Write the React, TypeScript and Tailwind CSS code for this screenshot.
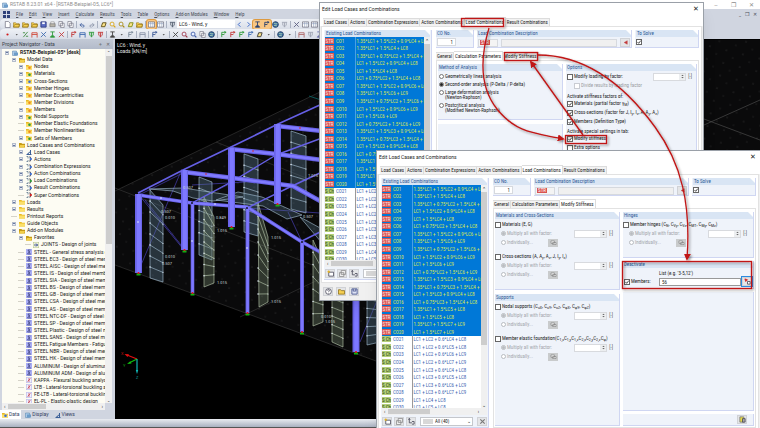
import type { ReactNode } from "react"

const MENUS = ["File", "Edit", "View", "Insert", "Calculate", "Results", "Tools", "Table", "Options", "Add-on Modules", "Window", "Help"]

type TreeRow = { label: string; depth: number; kind: string; toggle?: string; bold?: boolean }

const folder = (label: string, toggle = "+", depth = 2): TreeRow => ({ label, depth, kind: "folder", toggle })
const combo = (label: string, kind: string, toggle = "+"): TreeRow => ({ label, depth: 2, kind, toggle })
const addon = (label: string, kind = "steel"): TreeRow => ({ label, depth: 2, kind })

const TREE: TreeRow[] = [
  { label: "RSTAB-Beispiel-05* [desk]", depth: 0, kind: "model", toggle: "-", bold: true },
  { label: "Model Data", depth: 1, kind: "open", toggle: "-" },
  { ...folder("Nodes"), kind: "folder-orange" },
  { ...folder("Materials"), kind: "folder-green" },
  { ...folder("Cross-Sections"), kind: "folder-blue" },
  { ...folder("Member Hinges"), kind: "folder-orange" },
  { ...folder("Member Eccentricities"), kind: "folder-orange" },
  { ...folder("Member Divisions", ""), kind: "folder-orange" },
  { ...folder("Members"), kind: "folder-orange" },
  { ...folder("Nodal Supports"), kind: "folder-green" },
  { ...folder("Member Elastic Foundations", ""), kind: "folder-green" },
  { ...folder("Member Nonlinearities", ""), kind: "folder-orange" },
  { ...folder("Sets of Members"), kind: "folder-green" },
  { label: "Load Cases and Combinations", depth: 1, kind: "open", toggle: "-" },
  combo("Load Cases", "case"),
  combo("Actions", "combo-blue"),
  combo("Combination Expressions", "combo-blue"),
  combo("Action Combinations", "combo-blue"),
  combo("Load Combinations", "combo-green"),
  combo("Result Combinations", "combo-blue"),
  combo("Super Combinations", "combo-red", ""),
  folder("Loads", "+", 1),
  folder("Results", "+", 1),
  folder("Printout Reports", "", 1),
  folder("Guide Objects", "+", 1),
  { label: "Add-on Modules", depth: 1, kind: "open", toggle: "-" },
  { label: "Favorites", depth: 2, kind: "open", toggle: "-" },
  { label: "JOINTS - Design of joints", depth: 3, kind: "joints" },
  addon("STEEL - General stress analysis of steel members"),
  addon("STEEL EC3 - Design of steel members"),
  addon("STEEL AISC - Design of steel members"),
  addon("STEEL IS - Design of steel members"),
  addon("STEEL SIA - Design of steel members"),
  addon("STEEL BS - Design of steel members"),
  addon("STEEL GB - Design of steel members"),
  addon("STEEL CSA - Design of steel members"),
  addon("STEEL AS - Design of steel members"),
  addon("STEEL NTC-DF - Design of steel members"),
  addon("STEEL SP - Design of steel members"),
  addon("STEEL Plastic - Design of steel members"),
  addon("STEEL SANS - Design of steel members"),
  addon("STEEL Fatigue Members - Fatigue design"),
  addon("STEEL NBR - Design of steel members"),
  addon("STEEL HK - Design of steel members"),
  addon("ALUMINUM - Design of aluminum members"),
  addon("ALUMINUM ADM - Design of aluminum members"),
  addon("KAPPA - Flexural buckling analysis", "stability"),
  addon("LTB - Lateral-torsional buckling analysis", "stability"),
  addon("FE-LTB - Lateral-torsional buckling analysis", "stability"),
  addon("EL-PL - Elastic-plastic design", "stability"),
]

const COMBINATIONS = [
  "1.35*LC1 + 1.5*LC2 + 0.9*LC4 + LC8",
  "1.35*LC1 + 1.5*LC4 + LC8",
  "1.35*LC1 + 0.75*LC2 + 1.5*LC4 + LC8",
  "LC1 + 1.5*LC2 + 0.9*LC4 + LC8",
  "LC1 + 1.5*LC4 + LC8",
  "LC1 + 0.75*LC2 + 1.5*LC4 + LC8",
  "1.35*LC1 + 1.5*LC2 + 0.9*LC6 + LC9",
  "1.35*LC1 + 1.5*LC6 + LC9",
  "1.35*LC1 + 0.75*LC2 + 1.5*LC6 + LC9",
  "LC1 + 1.5*LC2 + 0.9*LC6 + LC9",
  "LC1 + 1.5*LC6 + LC9",
  "LC1 + 0.75*LC2 + 1.5*LC6 + LC9",
  "1.35*LC1 + 1.5*LC3 + 0.9*LC4 + LC8",
  "1.35*LC1 + 0.75*LC3 + 1.5*LC4 + LC8",
  "LC1 + 1.5*LC3 + 0.9*LC4 + LC8",
  "LC1 + 0.75*LC3 + 1.5*LC4 + LC8",
  "1.35*LC1 + 1.5*LC5 + LC8",
  "LC1 + 1.5*LC5 + LC8",
  "1.35*LC1 + 1.5*LC7 + LC9",
  "LC1 + 1.5*LC7 + LC9",
  "LC1 + LC2 + 0.6*LC4 + LC8",
  "LC1 + LC2 + 0.6*LC5 + LC8",
  "LC1 + LC2 + 0.6*LC6 + LC9",
  "LC1 + LC2 + 0.6*LC7 + LC9",
  "LC1 + LC3 + 0.6*LC4 + LC8",
  "LC1 + LC3 + 0.6*LC5 + LC8",
  "LC1 + LC3 + 0.6*LC6 + LC9",
  "LC1 + LC3 + 0.6*LC7 + LC9",
  "LC1 + LC4 + LC8",
  "LC1 + LC5 + LC8",
]

const DOT: Record<string, string> = { orange: "#f08a1c", green: "#2f9a3a", blue: "#3f6fd0", red: "#d02020" }

function TreeIcon({ kind }: { kind: string }) {
  const [base, tone] = kind.split("-")
  return (
    <svg viewBox="0 0 12 12" className="size-[6px] shrink-0" aria-hidden>
      {(base === "folder" || base === "open") && (
        <>
          <path d="M0 2h5l1 1.500h6V11H0z" fill={base === "open" ? "#c79a14" : "#e9b923"} />
          <path d={base === "open" ? "M2 6h10l-2 5H0z" : "M0 5h12v6H0z"} fill={base === "open" ? "#f2cf4a" : "#fbe06a"} />
          {tone && <circle cx="7" cy="7.500" r="2.600" fill={DOT[tone]} />}
        </>
      )}
      {base === "combo" && (
        <>
          <path d="M1 1h3v4M1 11h3V8" stroke="#55708a" strokeWidth="1.500" fill="none" />
          <path d="M6 2h3v8H6" stroke="#334" strokeWidth="1.400" fill="none" />
          <circle cx="9.500" cy="6" r="2.400" fill={DOT[tone]} />
        </>
      )}
      {base === "case" && <path d="M1 11h10M9 2v9M4 8v3M9 5 4 9" stroke="#3a5f98" strokeWidth="2" fill="none" />}
      {base === "model" && (
        <>
          <path d="M1 2h8v9H1z" fill="#a9c9e8" stroke="#5580aa" />
          <path d="M4 5h8v6H4z" fill="#6c9cc9" />
        </>
      )}
      {base === "joints" && (
        <>
          <path d="M0 0h12v12H0z" fill="#eef3d8" stroke="#8a9a55" />
          <path d="M2 6h8M6 3l3 3-3 3" stroke="#3a4f9a" strokeWidth="1.800" fill="none" />
        </>
      )}
      {base === "steel" && (
        <>
          <path d="M0 0h12v12H0z" fill="#a9adf5" />
          <path d="M9 2H4l2 4-3 4h7M7 4v5" stroke="#2b2f66" strokeWidth="1.200" fill="none" />
        </>
      )}
      {base === "stability" && (
        <>
          <path d="M.5.500h11v11H.5z" fill="#f1eefc" stroke="#8f90dd" />
          <path d="M3 9 9 3M6 2v8" stroke="#c23a4a" strokeWidth="1.400" fill="none" />
        </>
      )}
    </svg>
  )
}

// toolbar glyphs, drawn on a 16 unit grid
function Tool({ kind, color = "#3f5f9f" }: { kind: string; color?: string }) {
  return (
    <button type="button" aria-label={kind} className="grid h-[9px] w-[9px] shrink-0 place-items-center">
      <svg viewBox="0 0 16 16" className="size-[7px]" fill="none" stroke={color} strokeWidth="2" aria-hidden>
        {kind === "new" && <path d="M3 1h7l4 4v10H3z" fill="#fff" stroke="#667" strokeWidth="1.500" />}
        {kind === "open" && <path d="M1 14V4h5l2 2h6v8zM4 8h12l-3 6H1z" fill="#f5cf52" stroke="#8a6c14" strokeWidth="1.200" />}
        {kind === "save" && <><path d="M2 2h12v12H2z" fill="#5a6cc4" stroke="#2f3b80" /><path d="M5 3h6v4H5z" fill="#fff" stroke="none" /></>}
        {kind === "print" && <><path d="M2 6h12v7H2z" fill="#b9b4a8" stroke="#666" strokeWidth="1.300" /><path d="M4 2h8v4H4z" fill="#fff" stroke="#777" strokeWidth="1.200" /></>}
        {kind === "copy" && <path d="M2 1h8v10H2zM6 5h8v10H6z" fill="#fff" stroke="#667" strokeWidth="1.400" />}
        {kind === "undo" && <path d="M3 9h7a3 3 0 0 1 0 5H8M6 5 2 9l4 4" />}
        {kind === "redo" && <path d="M13 9H6a3 3 0 0 0 0 5h2M10 5l4 4-4 4" />}
        {kind === "pen" && <path d="M3 13 6 4h8l-3 9z" fill="#fbe38a" stroke={color} />}
        {kind === "lens" && <><circle cx="7" cy="7" r="4.500" fill="#e8f0ff" /><path d="m10.500 10.500 4 4" strokeWidth="3" /></>}
        {kind === "table" && <><path d="M1 2h14v12H1z" fill="#fff" stroke="#556" strokeWidth="1.400" /><path d="M1 6h14M6 2v12M11 2v12" stroke="#8899b8" strokeWidth="1.300" /></>}
        {kind === "frame" && <path d="M2 15V4h12v11M2 8h12" />}
        {kind === "cross" && <path d="M2 14 14 2M3 3l10 10" />}
        {kind === "member" && <path d="M3 14 13 2M2 4h5M9 12h5" />}
        {kind === "support" && <path d="M8 2v7M8 9l-5 5h10zM3 2h10" fill={color} />}
        {kind === "load" && <path d="M2 3h12M4 3v7M8 3v10M12 3v7M6 10l2 4 2-4" />}
        {kind === "dot" && <circle cx="8" cy="8" r="2.500" fill={color} stroke="none" />}
        {kind === "axis" && <path d="M4 14V3h9M4 8h6M10 5l4-2-4-2" />}
        {kind === "left" && <path d="m10 3-5 5 5 5" />}
        {kind === "right" && <path d="m6 3 5 5-5 5" />}
        {kind === "globe" && <><circle cx="8" cy="8" r="6.500" fill="#3a6ea5" stroke="#203c60" /><path d="M4 5c3 0 4 3 8 1M4 11c3-2 5 0 7 0" stroke="#bfe0b0" /></>}
        {kind === "more" && <path d="M6 7h5l-2.500 3z" fill="#555" stroke="none" />}
      </svg>
    </button>
  )
}

const Divider = () => <span className="mx-px h-[7px] w-px shrink-0 bg-[#aab2c2]" />

function Toolbars() {
  return (
    <div className="flex flex-col bg-[#d0d5e0]">
      <div className="flex h-[10px] w-[380px] items-center rounded-sm bg-gradient-to-b from-[#eef1f6] to-[#d9dee8] pl-[3px]">
        <Tool kind="new" />
        <Tool kind="open" />
        <Tool kind="open" color="#996" />
        <Tool kind="open" />
        <Tool kind="save" />
        <Tool kind="print" />
        <Tool kind="copy" />
        <Tool kind="copy" />
        <Divider />
        <Tool kind="undo" />
        <Tool kind="redo" color="#8a94a8" />
        <Divider />
        <Tool kind="pen" color="#5a4a12" />
        <Tool kind="lens" color="#d9a514" />
        <Tool kind="lens" color="#a98a14" />
        <Tool kind="pen" color="#7a8a14" />
        <Tool kind="open" />
        <Divider />
        <span className="grid rounded-xs bg-[#f9c784] ring-1 ring-[#dd9a40]"><Tool kind="table" /></span>
        <Tool kind="table" />
        <Divider />
        <Tool kind="load" color="#555f70" />
        <select
          aria-label="Load case"
          className="h-[8px] w-[58px] appearance-none bg-white px-[2px] leading-none text-[#222]"
        >
          <option>LC6 - Wind, y</option>
        </select>
        <Tool kind="left" color="#2458c4" />
        <Tool kind="right" color="#2458c4" />
        <span className="flex rounded-xs bg-[#f9c784] ring-1 ring-[#dd9a40]">
          <Tool kind="support" color="#29406e" />
          <Tool kind="axis" color="#29406e" />
        </span>
        <Tool kind="globe" />
        <Tool kind="load" color="#a0a6b4" />
        <Divider />
        <Tool kind="cross" color="#5c5f80" />
        <Tool kind="table" />
        <Tool kind="table" />
      </div>
      <div className="flex h-[10px] w-[380px] items-center rounded-sm bg-gradient-to-b from-[#eef1f6] to-[#d9dee8] pl-[3px]">
        <Tool kind="dot" color="#d11a1a" />
        <Tool kind="more" />
        <Tool kind="member" color="#3d8a3d" />
        <Tool kind="frame" color="#d04a3a" />
        <Tool kind="cross" color="#3d6ab0" />
        <Tool kind="support" color="#2f9a3a" />
        <Tool kind="cross" color="#c23a3a" />
        <Divider />
        <Tool kind="axis" color="#c23a3a" />
        <Tool kind="frame" color="#3d6ab0" />
        <Tool kind="load" color="#2f9a3a" />
        <Tool kind="load" color="#c23a3a" />
        <Divider />
        <Tool kind="support" color="#444" />
        <Tool kind="more" />
        <Tool kind="axis" color="#7a8a9a" />
        <Divider />
        <Tool kind="frame" color="#8a93a8" />
        <Divider />
        <Tool kind="axis" color="#3d5a98" />
        <Tool kind="more" />
        <Divider />
        <Tool kind="cross" color="#444" />
        <Tool kind="lens" color="#a03a4a" />
        <Tool kind="lens" color="#3d5aa8" />
        <Tool kind="copy" />
        <Tool kind="globe" />
        <Divider />
        <Tool kind="axis" color="#2f9a3a" />
        <Tool kind="axis" color="#c23a3a" />
        <Tool kind="axis" color="#2f9a3a" />
        <Tool kind="axis" color="#3d6ab0" />
        <Tool kind="pen" color="#333" />
        <Tool kind="more" />
        <Divider />
        <Tool kind="globe" />
        <Tool kind="more" />
        <Divider />
        <Tool kind="frame" color="#b06a6a" />
        <Tool kind="load" color="#a0a6b4" />
        <Tool kind="support" color="#6a6fb0" />
      </div>
    </div>
  )
}

const INDENT = ["pl-[2px]", "pl-[9px]", "pl-[16px]", "pl-[23px]"]

function Navigator() {
  return (
    <aside className="flex w-[113px] shrink-0 flex-col bg-[#d0d5e0]">
      <div className="flex h-[10px] shrink-0 items-center justify-between bg-gradient-to-b from-[#c3cad6] to-[#b3bbca] px-[2px] text-[#3a3f4a]">
        <h2>Project Navigator - Data</h2>
        <span className="flex gap-1 pr-px text-[#666]">
          <button type="button" aria-label="Pin">⌖</button>
          <button type="button" aria-label="Close navigator">✕</button>
        </span>
      </div>
      <div className="mr-px ml-[2px] flex min-h-0 flex-1">
        <div className="min-w-0 flex-1 overflow-hidden bg-[#fdfcf3]">
          <ul className="flex h-[356px] flex-col">
            {TREE.map((row) => (
              <li key={row.label} className={`flex min-h-0 flex-1 items-center gap-[2px] whitespace-nowrap ${INDENT[row.depth]}`}>
                <span className="grid w-[6px] shrink-0 place-items-center">
                  {row.toggle ? (
                    <span className="grid size-[4px] place-items-center border border-[#b4bccb] bg-[#e8ecf4]">
                      <span className="h-px w-[2px] bg-[#6678a0]" />
                    </span>
                  ) : (
                    <span className="h-px w-full bg-[#d5d3c8]" />
                  )}
                </span>
                <TreeIcon kind={row.kind} />
                <span className={row.bold ? "font-bold" : ""}>{row.label}</span>
              </li>
            ))}
          </ul>
        </div>
        <div className="flex w-[7px] flex-col items-center bg-[#f0f0f0]">
          <span className="grid h-[7px] place-items-center text-[4px]">⌃</span>
          <span className="h-[188px] w-[6px] bg-[#cdcdcd]" />
          <span className="mt-auto text-[4px]">⌄</span>
        </div>
      </div>
      <div className="mr-2 ml-[2px] flex h-[7px] shrink-0 items-center bg-[#f0f0f0] px-[2px]">
        <span>‹</span>
        <span className="mx-[2px] h-[5px] w-[38px] bg-[#cdcdcd]" />
        <span className="ml-auto">›</span>
      </div>
      <div className="flex h-[9px] shrink-0 items-center gap-[2px] text-[#33405e]">
        <button type="button" className="flex h-full items-center gap-px bg-white px-[2px]"><TreeIcon kind="folder-blue" />Data</button>
        <button type="button" className="flex items-center gap-px px-[2px]"><TreeIcon kind="model" />Display</button>
        <button type="button" className="flex items-center gap-px px-[2px]"><TreeIcon kind="case" />Views</button>
      </div>
    </aside>
  )
}

type Pt = [number, number]

const LINKS: { pts: Pt[]; w: number }[] = [
  { pts: [[138, 193], [185, 169], [231, 147], [278, 124], [322, 104]], w: 1.6 },
  { pts: [[190, 204], [233, 181], [276, 155], [322, 138]], w: 1.4 },
  { pts: [[247, 208], [290, 187], [322, 172]], w: 1.4 },
  { pts: [[302, 241], [322, 231]], w: 1.4 },
  { pts: [[138, 195], [192, 203], [247, 207], [302, 242], [322, 253]], w: 3.6 },
  { pts: [[184, 172], [233, 178], [293, 186], [322, 202]], w: 4.6 },
  { pts: [[230, 149], [276, 154], [322, 160]], w: 4.6 },
  { pts: [[277, 126], [322, 131]], w: 4.6 },
]

// x, top, bottom, width of each column
const COLUMNS = [
  [138.5, 194, 273, 7], [184.5, 170, 250, 7], [231.5, 148, 227, 7], [277.5, 124, 204, 7],
  [192.5, 203, 293, 3.6], [247.5, 208, 313, 3.8], [302, 242, 332, 3.8], [356, 250, 352, 7],
]

const LOAD_PANELS: { p: Pt[]; tone: string; steps: number }[] = [
  { p: [[150, 190], [163, 205], [163, 282], [150, 278]], tone: "b", steps: 7 },
  { p: [[199, 177], [212, 182], [212, 260], [199, 255]], tone: "b", steps: 6 },
  { p: [[204, 197], [214, 217], [214, 283], [204, 287]], tone: "g", steps: 7 },
  { p: [[244, 154], [258, 159], [258, 236], [244, 232]], tone: "b", steps: 6 },
  { p: [[258, 203], [268, 237], [268, 302], [259, 307]], tone: "g", steps: 7 },
  { p: [[291, 131], [306, 136], [306, 213], [291, 209]], tone: "b", steps: 6 },
  { p: [[313, 240], [323, 262], [323, 322], [313, 326]], tone: "g", steps: 6 },
  { p: [[332, 290], [343, 294], [343, 347], [332, 342]], tone: "g", steps: 5 },
  { p: [[367, 290], [380, 294], [380, 342], [367, 345]], tone: "b", steps: 5 },
]

const VALUES: [number, number, string][] = [
  [161, 213, "0.507"], [165, 219, "0.010"], [165, 258, "0.010"], [162, 265, "0.507"],
  [183, 189, "0.507"], [216, 219, "0.849"], [217, 232, "1.015"], [217, 284, "1.015"],
  [271, 239, "1.015"], [271, 303, "1.015"], [303, 218, "0.507"], [308, 177, "1.015"],
  [321, 318, "0.010"], [325, 323, "1.015"],
]

const join = (pts: Pt[]) => pts.map((p) => p.join(",")).join(" ")

function Viewport() {
  return (
    <div className="relative min-w-0 flex-1 bg-black">
      <svg viewBox="115 39 645 380" preserveAspectRatio="xMinYMin slice" className="absolute inset-0 size-full" aria-label="Structural model">
        <defs>
          <pattern id="floor" width="17" height="13" patternUnits="userSpaceOnUse" patternTransform="rotate(14)">
            <circle cx="3" cy="3" r=".5" fill="#4a4a4a" />
            <circle cx="11" cy="9" r=".5" fill="#3a3a3a" />
          </pattern>
        </defs>
        <path d="M115 191 320 92 440 40H760V300L376 361 115 265z" fill="#0a0a0b" />
        <path d="M115 191 320 92 440 40H760V300L376 361 115 265z" fill="url(#floor)" />
        <g fill="none" stroke="#3c3c3c" strokeWidth=".6">
          <path d="M115 191 320 92M115 265l261 96M115 188l200 78M216 142l100 40M240 317l80-38" />
          <path d="M704 119l56 21M704 125l56-25" stroke="#555" />
        </g>
        <path d="M309 96l12 4" stroke="#0a6a6a" strokeWidth=".8" />
        <g stroke="#4038a0" strokeWidth=".8" fill="none">
          <path d="M139 195l45 55M141 265l41-96M139 195l46-23M185 250l-40-50M192 203l43-22M247 208l73 5M192 185l54-3M302 242l-14-30M360 342l18-44" />
        </g>
        {LOAD_PANELS.map(({ p, tone, steps }) => {
          const line = tone === "b" ? "#a9c4d8" : "#bfd0b4"
          return (
            <g key={join(p)} stroke={line} strokeWidth=".6">
              <polygon points={join(p)} fill={tone === "b" ? "#5a7a90" : "#6f8068"} fillOpacity=".38" />
              {Array.from({ length: steps }, (_, i) => {
                const t = (i + 1) / (steps + 1)
                const y1 = p[0][1] + (p[3][1] - p[0][1]) * t
                const y2 = p[1][1] + (p[2][1] - p[1][1]) * t
                return (
                  <g key={i}>
                    <line x1={p[0][0]} y1={y1} x2={p[1][0]} y2={y2} />
                    <circle cx={p[0][0]} cy={y1} r=".7" fill="#e8f4ff" stroke="none" />
                    <circle cx={p[1][0]} cy={y2} r=".5" fill="#e8f4ff" stroke="none" />
                  </g>
                )
              })}
            </g>
          )
        })}
        <g stroke="#a9c4d8" strokeWidth=".6" fill="#5a7a90" fillOpacity=".3">
          <path d="M149 189l34-1 60 9-30 4-20-3-20-7zM216 200l22-8 24 5 40 18-15 4-24-13zM300 217l22 26v-14z" />
        </g>
        {LINKS.map(({ pts, w }) => (
          <g key={join(pts)} fill="none" strokeLinejoin="round">
            <polyline points={join(pts)} stroke="#6660e6" strokeWidth={w} />
            {w > 3 && <polyline points={join(pts)} stroke="#817cff" strokeWidth={w / 2} />}
          </g>
        ))}
        {COLUMNS.map(([x, top, bottom, w]) => (
          <g key={`${x}-${top}`}>
            <rect x={x - w / 2} y={top} width={w} height={bottom - top} fill="#6a64e8" />
            <rect x={x - w / 4} y={top} width={w / 1.7} height={bottom - top} fill="#7d78ff" />
            <rect x={x - 2} y={bottom + 0.5} width="4" height="2" fill="#12b012" />
            <circle cx={x} cy={bottom} r="1.100" fill="#e01818" />
          </g>
        ))}
        {[[192, 203], [247, 208], [302, 242]].map(([x, y]) => (
          <circle key={x} cx={x} cy={y} r="1" fill="#15152a" />
        ))}
        {[[206, 174], [253, 151], [300, 128]].map(([x, y]) => (
          <circle key={x} cx={x} cy={y} r=".8" fill="#e02020" />
        ))}
        {[[138, 222], [192, 241], [247, 248], [161, 198], [215, 204]].map(([x, y]) => (
          <circle key={x} cx={x} cy={y} r=".8" fill="#e8f4ff" />
        ))}
        <g fill="#c9d6d6" fontSize="4">
          {VALUES.map(([x, y, text]) => (
            <text key={`${x}-${y}`} x={x} y={y}>{text}</text>
          ))}
        </g>
        <g fill="none" strokeWidth="1.200">
          <path d="M137 359l-10-4" stroke="#e01010" />
          <path d="M137 359l-8 4" stroke="#10c010" />
          <path d="M137 359v12" stroke="#10b8b8" />
        </g>
        <path d="M124.500 354l4.500.300-1.500 2.700z" fill="#e01010" />
        <path d="M127 364l4.500-.5-1.200-2.200z" fill="#10c010" />
        <path d="M137 374l-1.200-4h2.400z" fill="#10b8b8" />
        <g fontSize="4">
          <text x="121" y="355" fill="#c01010">X</text>
          <text x="123" y="367" fill="#10a010">Y</text>
          <text x="136" y="379" fill="#10a0a0">Z</text>
        </g>
      </svg>
      <p className="relative px-[2px] pt-[3px] leading-[6px] text-[#e6e6e6]">
        LC6 : Wind, y
        <br />
        Loads [kN/m]
      </p>
    </div>
  )
}

function Group({ title, className = "", children }: { title?: string; className?: string; children?: ReactNode }) {
  return (
    <section className={`flex flex-col border-r border-b border-[#cfd6f2] bg-[#eff3fa] ${className}`}>
      {title && (
        <div className="bg-white">
          <h3 className="h-[7px] bg-[#d9e5f4] pl-px leading-[7px] text-[#2f5a96] [clip-path:polygon(0_0,calc(100%-5px)_0,100%_5px,100%_100%,0_100%)]">
            {title}
          </h3>
        </div>
      )}
      {children}
    </section>
  )
}

function Check({ children, label, checked, muted }: { children?: ReactNode; label?: string; checked?: boolean; muted?: boolean }) {
  return (
    <label className={`flex h-[9px] items-center gap-px whitespace-nowrap ${muted ? "text-[#9a9da2]" : "text-[#222]"}`}>
      <span className="grid shrink-0 place-items-center">
        <input
          type="checkbox"
          aria-label={label}
          defaultChecked={checked}
          disabled={muted}
          className={`size-[6px] appearance-none border bg-white [grid-area:1/1] ${muted ? "border-[#c9ccd2]" : "border-[#666]"}`}
        />
        {checked && (
          <svg viewBox="0 0 6 6" className="pointer-events-none size-[6px] [grid-area:1/1]" aria-hidden>
            <path d="M1.500 3l1.200 1.300L4.800 1.600" fill="none" stroke="#222" strokeWidth=".8" />
          </svg>
        )}
      </span>
      <span>{children}</span>
    </label>
  )
}

function Radio({ name, checked, muted, children }: { name: string; checked?: boolean; muted?: boolean; children: ReactNode }) {
  return (
    <label className={`flex items-start gap-px leading-[5px] whitespace-nowrap ${muted ? "text-[#a2a5aa]" : "text-[#222]"}`}>
      <span className="grid shrink-0 place-items-center">
        <input
          type="radio"
          name={name}
          defaultChecked={checked}
          disabled={muted}
          className={`size-[5px] appearance-none rounded-full border bg-white [grid-area:1/1] ${muted ? "border-[#b8bbc0]" : "border-[#777]"}`}
        />
        {checked && <span className={`pointer-events-none size-[3px] rounded-full [grid-area:1/1] ${muted ? "bg-[#b8bbc0]" : "bg-[#222]"}`} />}
      </span>
      <span>{children}</span>
    </label>
  )
}

function Spinner({ label }: { label: string }) {
  return (
    <span className="flex items-center gap-[2px]">
      <span className="flex h-[8px] w-[33px] border border-[#d8dade] bg-white">
        <input aria-label={label} disabled className="min-w-0 flex-1" />
        <span className="grid w-[6px] place-items-center bg-[#eceef0]">
          <svg viewBox="0 0 6 6" className="size-[5px]" fill="#666" aria-hidden>
            <path d="M1.500 2.300 3 .8l1.500 1.500zM1.500 3.700 3 5.200l1.500-1.500z" />
          </svg>
        </span>
      </span>
      <span className="text-[#555]">[-]</span>
    </span>
  )
}

const Sym = ({ b, s }: { b: string; s: string }) => (
  <>
    {b}
    <span className="relative top-px text-[4px]">{s}</span>
  </>
)

function FactorBlock({ name, children }: { name: string; children: ReactNode }) {
  return (
    <div>
      <Check>{children}</Check>
      <div className="flex h-[9px] items-center justify-between pr-[6px] pl-[6px]">
        <Radio name={name} checked muted>Multiply all with factor:</Radio>
        <Spinner label={`${name} factor`} />
      </div>
      <div className="flex h-[9px] items-center pl-[6px]">
        <span className="w-[47px]"><Radio name={name} muted>Individually...</Radio></span>
        <button type="button" aria-label="Edit individually" className="grid h-[8px] w-[10px] place-items-center bg-[#c9cbcc]">
          <svg viewBox="0 0 8 6" className="h-[5px] w-[7px]" aria-hidden>
            <path d="M1 1h4v3H1zM3 3h4v2.500H3z" fill="#eee" stroke="#777" strokeWidth=".7" />
          </svg>
        </button>
      </div>
    </div>
  )
}

function CombinationList() {
  return (
    <div className="flex flex-col">
      <div className="flex h-[223px] bg-white">
        <div className="min-w-0 flex-1 overflow-hidden">
          <table className="h-[226px] w-full table-fixed border-collapse leading-[6px] whitespace-nowrap">
            <colgroup>
              <col className="w-[9px]" />
              <col className="w-[21px]" />
              <col />
            </colgroup>
            <tbody>
              {COMBINATIONS.map((expr, i) => {
                const selected = i < 20
                return (
                  <tr key={expr} className={selected ? "bg-[#0078d7] text-[#dcea4c]" : "bg-white text-[#3a5fb0]"}>
                    <td className="p-0 align-middle">
                      <span className={`block h-[6px] text-center ${selected ? "bg-[#d9534f] text-[#fbe3e3]" : "bg-[#b5cf7a] text-[#24400c]"}`}>
                        {selected ? "STR" : "S Ch"}
                      </span>
                    </td>
                    <td className="p-0 pl-[2px] align-middle">CO{i + 1}</td>
                    <td className={`overflow-hidden border-l p-0 pl-px align-middle ${selected ? "border-[#4aa0e6]" : "border-[#999]"}`}>{expr}</td>
                  </tr>
                )
              })}
            </tbody>
          </table>
        </div>
        <div className="flex w-[6px] flex-col items-center bg-[#f0f0f0]">
          <span className="h-[7px] text-[5px] leading-[8px]">⌃</span>
          <span className="h-[153px] w-full bg-[#cdcdcd]" />
          <span className="mt-auto text-[5px]">⌄</span>
        </div>
      </div>
      <div className="flex h-[7px] items-center bg-[#f0f0f0] pr-[8px] pl-[2px]">
        <span>‹</span>
        <span className="mx-[3px] h-[5px] w-[42px] bg-[#cdcdcd]" />
        <span className="ml-auto">›</span>
      </div>
      <div className="flex h-[12px] items-center gap-[2px]">
        <PushButton label="New" glyph="new" />
        <PushButton label="Copy" glyph="copy" />
        <PushButton label="Sort" glyph="sort" />
        <span className="mx-[2px] flex h-[9px] flex-1 items-center border border-[#c4c7cc] bg-white pl-[2px]">
          <span className="h-[5px] w-[10px] shrink-0 bg-[#d8d8d8]" />
          <select aria-label="Filter" className="min-w-0 flex-1 appearance-none pl-[2px] leading-none">
            <option>All (40)</option>
          </select>
          <span className="pr-px leading-[3px]">⌄</span>
        </span>
        <PushButton label="Delete" glyph="delete" />
      </div>
    </div>
  )
}

function PushButton({ label, glyph }: { label: string; glyph: string }) {
  return (
    <button type="button" aria-label={label} className="grid h-[9px] w-[10px] shrink-0 place-items-center border border-[#d0d2d6] bg-[#e4e5e7]">
      <svg viewBox="0 0 16 16" className="size-[7px]" fill="none" stroke="#445" strokeWidth="1.800" aria-hidden>
        {glyph === "new" && <><path d="M4 5h11v9H4z" fill="#fff" /><path d="M1 4h6M4 1v6" stroke="#e0b020" strokeWidth="2.500" /></>}
        {glyph === "copy" && <path d="M5 1h10v9H5zM1 6h10v9H1z" fill="#eee" stroke="#888" />}
        {glyph === "sort" && <path d="M3 1v10h6M9 8h5v6H9M1 4l2-3 2 3" />}
        {glyph === "delete" && <path d="M3 3l10 10M13 3 3 13" stroke="#777" strokeWidth="2.500" />}
        {glyph === "help" && <><circle cx="8" cy="8" r="6.500" fill="#fff" /><path d="M6 6c0-3 4-3 4 0 0 1.500-2 1.500-2 3M8 11v1.500" /></>}
        {glyph === "open" && <path d="M1 14V4h5l2 2h7v8z" fill="#f5cf52" stroke="#8a6c14" />}
        {glyph === "save" && <path d="M2 2h12v12H2zM5 2v5h6V2" fill="#dfe4f4" stroke="#3b4a8a" />}
        {glyph === "pick" && <><path d="M2 2l6 2-4 4z" fill="#d02020" stroke="#d02020" /><path d="M8 8h6v6H8z" fill="#fff" /></>}
        {glyph === "arrow" && <path d="M12 4 5 8l7 4z" fill="#c23a3a" stroke="#c23a3a" strokeWidth="1" />}
        {glyph === "info" && <><path d="M2 2h9v12H2z" fill="#e6d94a" stroke="#777" /><path d="M8 6h6v8H8z" fill="#aaa" /></>}
      </svg>
    </button>
  )
}

const DIALOG_TABS = ["Load Cases", "Actions", "Combination Expressions", "Action Combinations", "Load Combinations", "Result Combinations"]

function TabStrip({ tabs, active }: { tabs: string[]; active: string }) {
  return (
    <div role="tablist" className="flex h-[9px] shrink-0 items-end">
      {tabs.map((tab) => (
        <button
          key={tab}
          type="button"
          role="tab"
          aria-selected={tab === active}
          className={`border-t border-r border-[#dcdcdc] px-px whitespace-nowrap ${tab === active ? "h-[9px] bg-white" : "h-[8px] bg-[#f2f2f2]"}`}
        >
          {tab}
        </button>
      ))}
    </div>
  )
}

function Dialog({ className, activeTab, children }: { className: string; activeTab: string; children: ReactNode }) {
  return (
    <div role="dialog" aria-label="Edit Load Cases and Combinations" className={`absolute flex w-[385px] flex-col border border-[#9aa0a8] bg-[#f0f0f0] px-px font-['Roboto_Condensed','Liberation_Sans_Narrow','Open_Sans',sans-serif] shadow-lg ${className}`}>
      <header className="-mx-px flex h-[13px] items-center justify-between bg-white pr-1 pl-[2px] font-[Roboto,'Liberation_Sans',sans-serif]">
        <h2>Edit Load Cases and Combinations</h2>
        <button type="button" aria-label="Close dialog" className="text-[7px]">✕</button>
      </header>
      <div className="-mx-px bg-white px-[3px] pt-px">
        <TabStrip tabs={DIALOG_TABS} active="Load Combinations" />
      </div>
      <div className="flex gap-[4px] border border-[#e2e2e2] bg-white p-[2px] pt-[3px]">
        <Group title="Existing Load Combinations" className="w-[108px] shrink-0 px-px">
          <CombinationList />
        </Group>
        <div className="flex min-w-0 flex-1 flex-col">
          <div className="flex gap-[3px]">
            <Group title="CO No." className="h-[18px] w-[38px]">
              <input aria-label="CO number" defaultValue="1" className="m-px h-[8px] w-[19px] border border-[#d6d9de] bg-white pr-[2px] text-right" />
            </Group>
            <Group title="Load Combination Description" className="h-[18px] flex-1">
              <div className="flex items-center gap-[3px] p-px">
                <span className="grid h-[8px] w-[20px] items-center border border-[#d6d9de] bg-[#f4f4f4] pl-px">
                  <span className="h-[5px] w-[10px] bg-[#d9534f] text-center leading-[5px] text-white">STR</span>
                </span>
                <input aria-label="Load combination description" className="h-[8px] min-w-0 flex-1 border border-[#d6d9de] bg-[#f0f0f0]" />
                <PushButton label="Insert description" glyph="arrow" />
              </div>
            </Group>
            <Group title="To Solve" className="h-[18px] w-[64px] pl-px">
              <Check label="To solve" checked />
            </Group>
          </div>
          <div className="mt-[3px] flex min-h-0 flex-1 flex-col">
            <TabStrip tabs={["General", "Calculation Parameters", "Modify Stiffness"]} active={activeTab} />
            <div className="flex min-h-0 flex-1 gap-[3px] border border-[#e2e2e2] bg-white p-px pt-[3px]">{children}</div>
          </div>
        </div>
      </div>
      <footer className="flex items-center gap-[3px] px-[2px] py-[4px]">
        <PushButton label="Help" glyph="help" />
        <PushButton label="Open" glyph="open" />
        <PushButton label="Save" glyph="save" />
      </footer>
    </div>
  )
}

function CalculationParameters() {
  return (
    <>
      <div className="flex w-[125px] flex-col gap-[4px]">
        <Group title="Method of Analysis" className="h-[56px]">
          <div className="flex flex-col gap-[3px] pt-[3px] pl-px">
            <Radio name="method">Geometrically linear analysis</Radio>
            <Radio name="method" checked>Second-order analysis (P-Delta / P-delta)</Radio>
            <Radio name="method">Large deformation analysis<br />(Newton-Raphson)</Radio>
            <Radio name="method">Postcritical analysis<br />(Modified Newton-Raphson)</Radio>
          </div>
        </Group>
        <Group className="flex-1" />
      </div>
      <Group title="Options" className="flex-1">
        <div className="flex flex-col pt-px pl-px">
          <div className="flex items-center justify-between pr-1">
            <Check>Modify loading by factor:</Check>
            <Spinner label="Loading factor" />
          </div>
          <div className="pl-[7px]"><Check muted>Divide results by loading factor</Check></div>
          <p className="mt-[3px] leading-[6px]">Activate stiffness factors of:</p>
          <Check checked>Materials (partial factor <Sym b="γ" s="M" />)</Check>
          <Check checked>Cross-sections (factor for J, <Sym b="I" s="y" />, <Sym b="I" s="z" />, A, <Sym b="A" s="y" />, <Sym b="A" s="z" />)</Check>
          <Check checked>Members (Definition Type)</Check>
          <p className="mt-[2px] leading-[6px]">Activate special settings in tab:</p>
          <Check checked>Modify stiffness</Check>
          <Check>Extra options</Check>
        </div>
      </Group>
    </>
  )
}

function ModifyStiffness() {
  return (
    <>
      <div className="flex w-[125px] flex-col gap-[4px]">
        <Group title="Materials and Cross-Sections" className="h-[78px]">
          <div className="flex flex-col gap-[5px] pt-px">
            <FactorBlock name="materials">Materials (E, G)</FactorBlock>
            <FactorBlock name="sections">
              Cross-sections (A, <Sym b="A" s="y" />, <Sym b="A" s="z" />, J, <Sym b="I" s="y" />, <Sym b="I" s="z" />)
            </FactorBlock>
          </div>
        </Group>
        <Group title="Supports" className="flex-1">
          <div className="flex flex-col gap-[5px] pt-px">
            <FactorBlock name="supports">
              Nodal supports (<Sym b="C" s="uX" />, <Sym b="C" s="uY" />, <Sym b="C" s="uZ" />, <Sym b="C" s="φX" />, <Sym b="C" s="φY" />, <Sym b="C" s="φZ" />)
            </FactorBlock>
            <FactorBlock name="foundation">
              Member elastic foundation(<Sym b="C" s="1,x" /><Sym b="C" s="1,y" /><Sym b="C" s="1,z" /><Sym b="C" s="2,x" /><Sym b="C" s="2,y" /><Sym b="C" s="2,z" /><Sym b="C" s="φ" />)
            </FactorBlock>
          </div>
        </Group>
      </div>
      <div className="flex min-w-0 flex-1 flex-col gap-[3px]">
        <Group title="Hinges" className="h-[46px]">
          <div className="pt-px">
            <FactorBlock name="hinges">
              Member hinges (<Sym b="C" s="N" />, <Sym b="C" s="Vy" />, <Sym b="C" s="Vz" />, <Sym b="C" s="MT" />, <Sym b="C" s="My" />, <Sym b="C" s="Mz" />)
            </FactorBlock>
          </div>
        </Group>
        <Group title="Deactivate" className="h-[28px]">
          <div className="grid grid-cols-[34px_1fr_auto] items-center gap-x-px px-px pt-[2px]">
            <span />
            <label htmlFor="members" className="leading-[7px]">List (e.g. '3-5,12')</label>
            <span />
            <Check checked>Members:</Check>
            <input id="members" defaultValue="56" className="h-[8px] min-w-0 border border-[#999] bg-white pl-[2px]" />
            <span className="grid ring-1 ring-[#2a8ae0]"><PushButton label="Pick members" glyph="pick" /></span>
          </div>
        </Group>
        <Group className="flex-1" />
        <Group className="items-end justify-center px-[6px] py-px"><PushButton label="Details" glyph="info" /></Group>
      </div>
    </>
  )
}

function Annotations() {
  return (
    <svg viewBox="0 0 760 428" preserveAspectRatio="xMinYMin meet" className="pointer-events-none absolute inset-0 size-full" aria-hidden>
      <defs>
        <marker id="head" viewBox="0 0 8 8" refX="6" refY="4" markerWidth="7" markerHeight="7" orient="auto" markerUnits="userSpaceOnUse">
          <path d="M0 0l8 4-8 4z" fill="#c01414" />
        </marker>
        <filter id="shade" x="-10%" y="-10%" width="120%" height="120%">
          <feDropShadow dx="1.500" dy="1.500" stdDeviation=".8" floodColor="#000" floodOpacity=".4" />
        </filter>
      </defs>
      <g fill="none" stroke="#c01414" strokeWidth="1.300" filter="url(#shade)">
        <rect x="461.500" y="18.500" width="42" height="8" />
        <rect x="504.500" y="52.500" width="33" height="8" />
        <rect x="565.500" y="135.500" width="41" height="8" />
        <rect x="622.500" y="261.500" width="129" height="27" />
        <path d="M489 28C481 55 478 85 497 109S535 133 563 139" markerEnd="url(#head)" />
        <path d="M583 135 531 62" markerEnd="url(#head)" />
        <path d="M538 55C590 55 628 90 655 127S691 205 687 259" markerEnd="url(#head)" />
      </g>
    </svg>
  )
}

export default function App() {
  return (
    <div className="relative flex h-screen flex-col overflow-hidden bg-[#d0d5e0] font-[Roboto,'Liberation_Sans',sans-serif] text-[5px] leading-none text-[#222]">
      <header className="flex h-[9px] shrink-0 items-center gap-[2px] bg-white px-[2px] text-[#8d8d8d]">
        <TreeIcon kind="model" />
        <h1>RSTAB 8.23.01 x64 - [RSTAB-Beispiel-05, LC6*]</h1>
        <span className="ml-auto flex gap-[13px] pr-1 text-[6px]">
          <button type="button" aria-label="Minimize">–</button>
          <button type="button" aria-label="Restore">❐</button>
          <button type="button" aria-label="Close">✕</button>
        </span>
      </header>
      <nav className="flex h-[10px] shrink-0 items-center gap-[6px] px-[3px] font-['Roboto_Condensed','Liberation_Sans_Narrow','Open_Sans',sans-serif] text-[#4a4f5a]">
        <svg viewBox="0 0 12 12" className="size-[7px]" aria-hidden>
          <path d="M0 0h12v12H0z" fill="#2c3f78" />
          <path d="M6 0v12M0 6h12" stroke="#e8ecf6" strokeWidth="1.500" />
        </svg>
        {MENUS.map((menu) => (
          <button key={menu} type="button" className="whitespace-nowrap"><u>{menu[0]}</u>{menu.slice(1)}</button>
        ))}
        <span className="ml-auto flex gap-[4px]"><span>_</span><span>❐</span><span>✕</span></span>
      </nav>
      <div className="shrink-0"><Toolbars /></div>
      <main className="flex min-h-0 flex-1 gap-[2px]">
        <Navigator />
        <Viewport />
      </main>
      <footer className="h-[9px] shrink-0 border-b border-[#555] bg-gradient-to-b from-[#e9ecf1] to-[#a9b1c0]" />
      <Dialog className="top-[2px] left-[319px]" activeTab="Calculation Parameters">
        <CalculationParameters />
      </Dialog>
      <Dialog className="top-[150px] left-[376px]" activeTab="Modify Stiffness">
        <ModifyStiffness />
      </Dialog>
      <Annotations />
    </div>
  )
}
